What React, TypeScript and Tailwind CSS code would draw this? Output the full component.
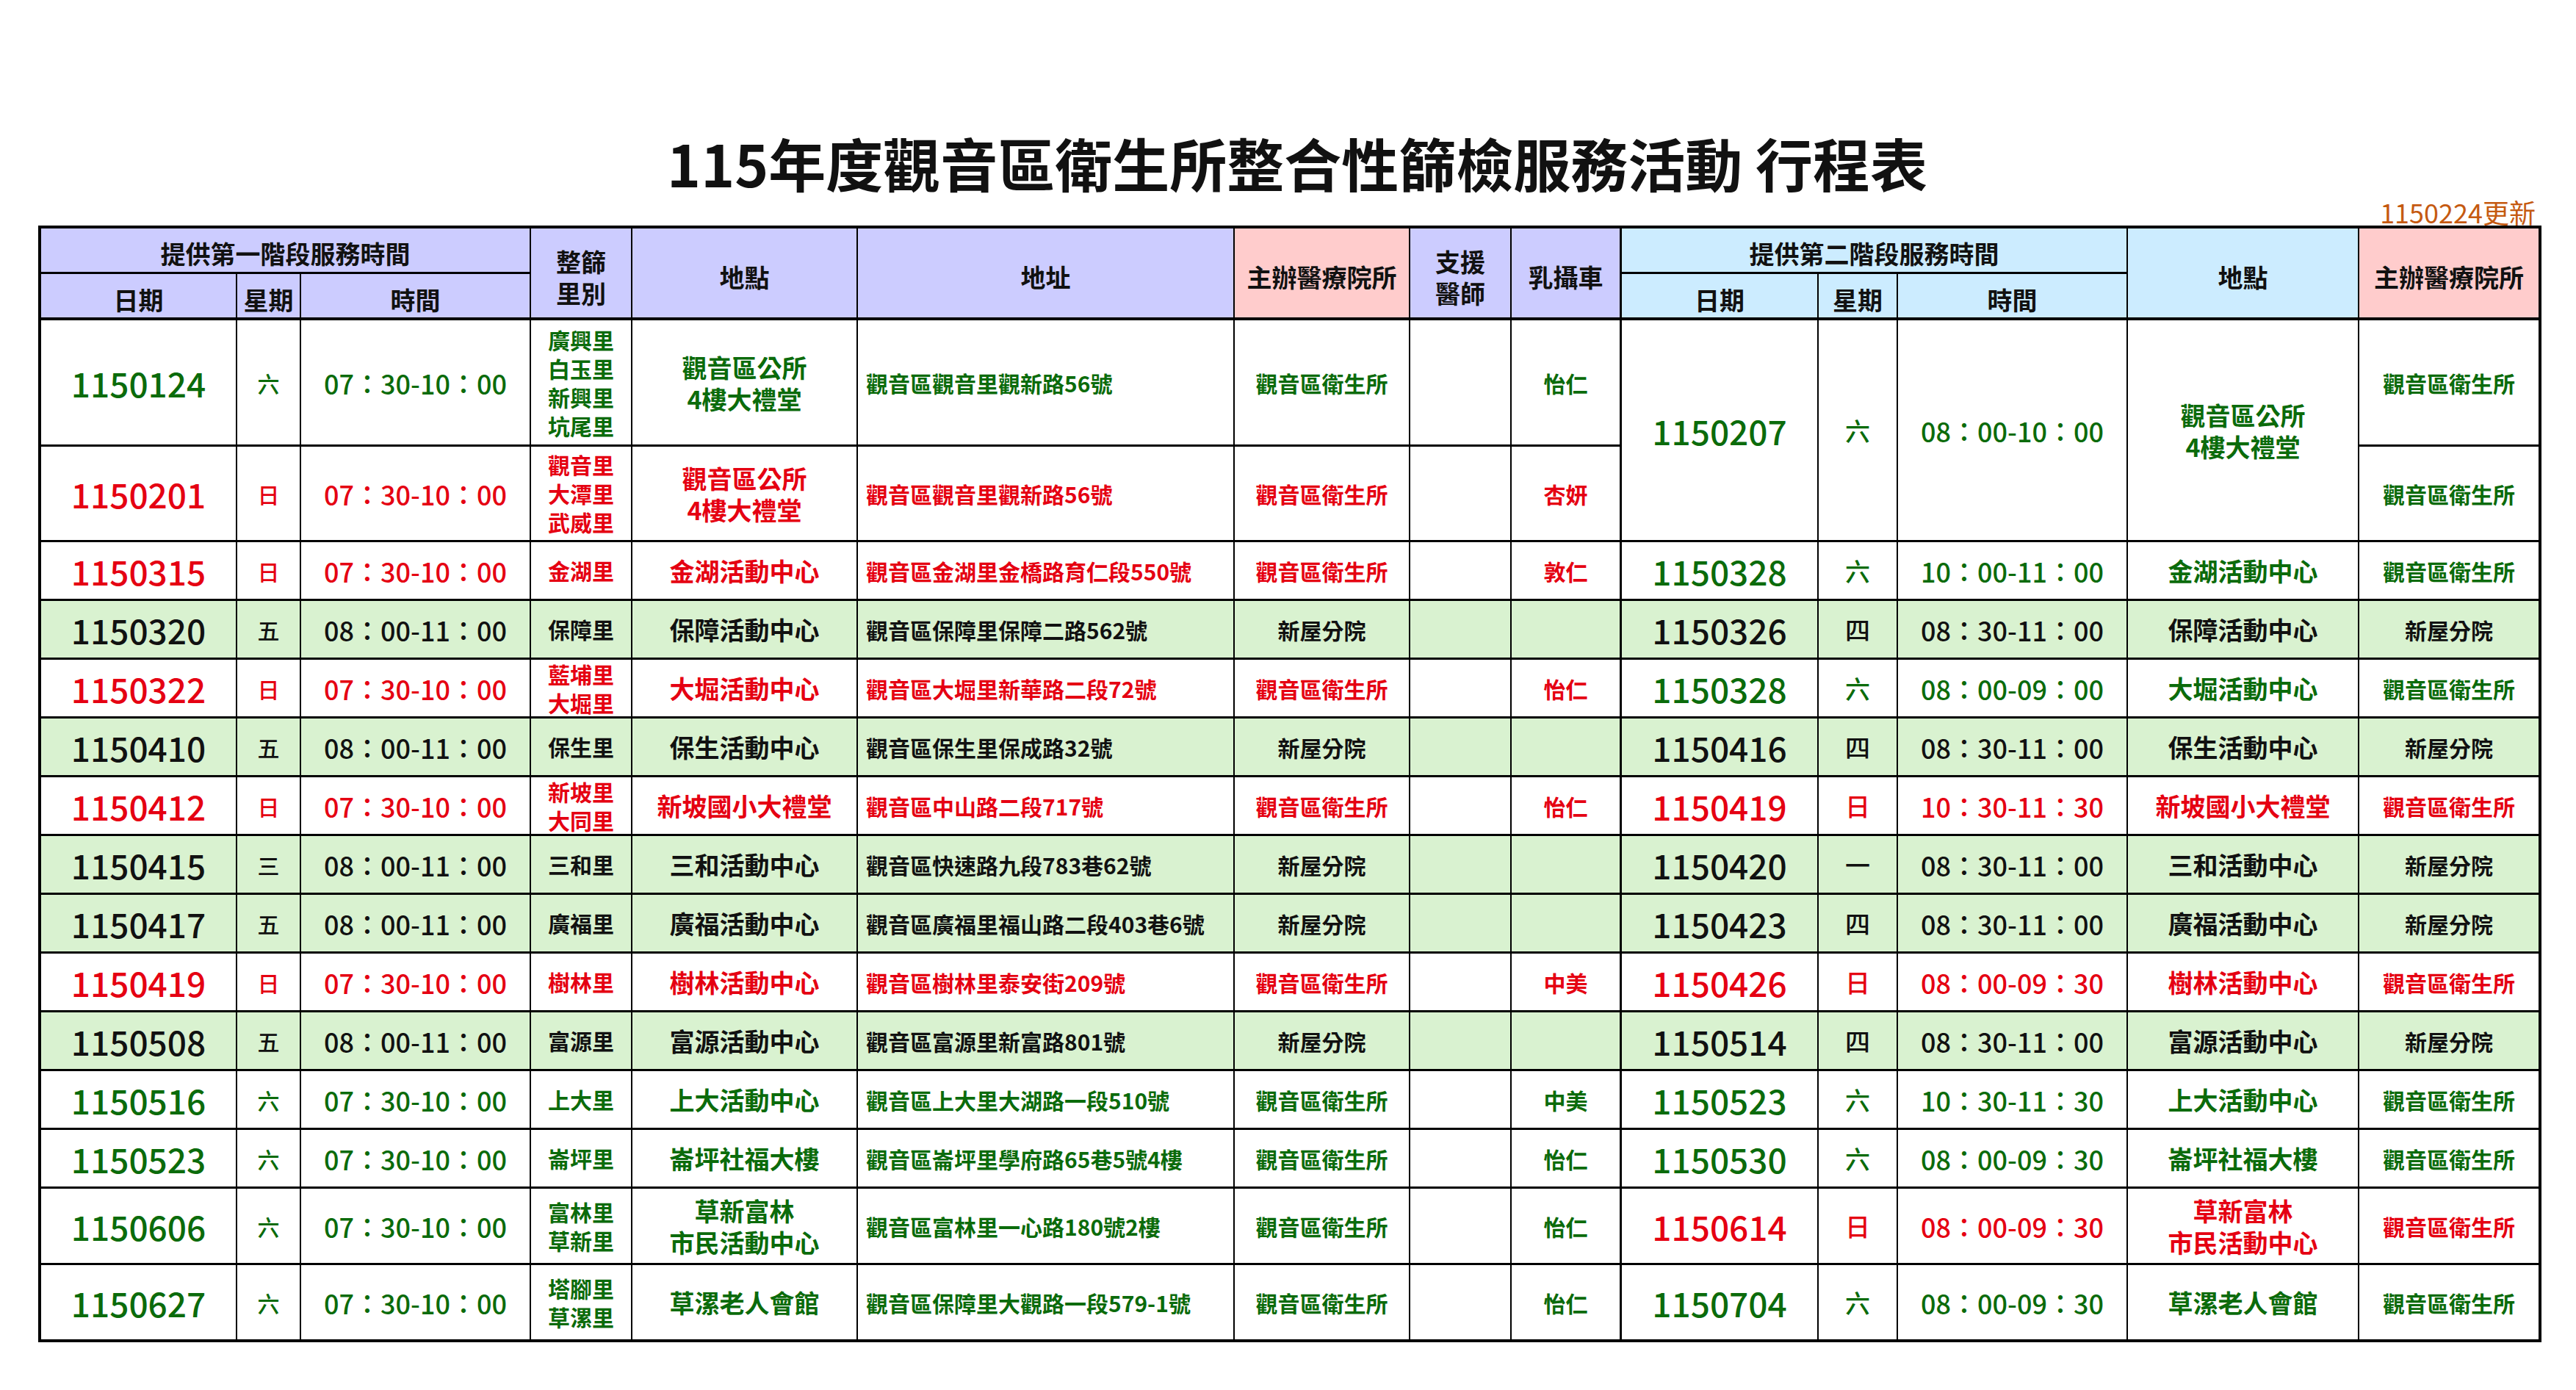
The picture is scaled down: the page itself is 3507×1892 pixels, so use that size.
import React from "react";

const C = {
  g: "text-[#0b6b0b]",
  r: "text-[#e50012]",
  k: "text-[#111111]",
} as const;
type Col = keyof typeof C;

type Right = { date: string; wk: string; time: string; place: string[]; c: Col; span?: boolean };
type Row = {
  bg?: boolean;
  c: Col;
  date: string;
  wk: string;
  time: string;
  li: string[];
  place: string[];
  addr: string;
  host: string;
  mammo?: string;
  right?: Right;
  host2: string;
  hc: Col;
};

const rows: Row[] = [
  {
    c: "g", date: "1150124", wk: "六", time: "07：30-10：00",
    li: ["廣興里", "白玉里", "新興里", "坑尾里"], place: ["觀音區公所", "4樓大禮堂"],
    addr: "觀音區觀音里觀新路56號", host: "觀音區衛生所", mammo: "怡仁",
    right: { date: "1150207", wk: "六", time: "08：00-10：00", place: ["觀音區公所", "4樓大禮堂"], c: "g", span: true },
    host2: "觀音區衛生所", hc: "g",
  },
  {
    c: "r", date: "1150201", wk: "日", time: "07：30-10：00",
    li: ["觀音里", "大潭里", "武威里"], place: ["觀音區公所", "4樓大禮堂"],
    addr: "觀音區觀音里觀新路56號", host: "觀音區衛生所", mammo: "杏妍",
    host2: "觀音區衛生所", hc: "g",
  },
  {
    c: "r", date: "1150315", wk: "日", time: "07：30-10：00",
    li: ["金湖里"], place: ["金湖活動中心"],
    addr: "觀音區金湖里金橋路育仁段550號", host: "觀音區衛生所", mammo: "敦仁",
    right: { date: "1150328", wk: "六", time: "10：00-11：00", place: ["金湖活動中心"], c: "g" },
    host2: "觀音區衛生所", hc: "g",
  },
  {
    bg: true, c: "k", date: "1150320", wk: "五", time: "08：00-11：00",
    li: ["保障里"], place: ["保障活動中心"],
    addr: "觀音區保障里保障二路562號", host: "新屋分院",
    right: { date: "1150326", wk: "四", time: "08：30-11：00", place: ["保障活動中心"], c: "k" },
    host2: "新屋分院", hc: "k",
  },
  {
    c: "r", date: "1150322", wk: "日", time: "07：30-10：00",
    li: ["藍埔里", "大堀里"], place: ["大堀活動中心"],
    addr: "觀音區大堀里新華路二段72號", host: "觀音區衛生所", mammo: "怡仁",
    right: { date: "1150328", wk: "六", time: "08：00-09：00", place: ["大堀活動中心"], c: "g" },
    host2: "觀音區衛生所", hc: "g",
  },
  {
    bg: true, c: "k", date: "1150410", wk: "五", time: "08：00-11：00",
    li: ["保生里"], place: ["保生活動中心"],
    addr: "觀音區保生里保成路32號", host: "新屋分院",
    right: { date: "1150416", wk: "四", time: "08：30-11：00", place: ["保生活動中心"], c: "k" },
    host2: "新屋分院", hc: "k",
  },
  {
    c: "r", date: "1150412", wk: "日", time: "07：30-10：00",
    li: ["新坡里", "大同里"], place: ["新坡國小大禮堂"],
    addr: "觀音區中山路二段717號", host: "觀音區衛生所", mammo: "怡仁",
    right: { date: "1150419", wk: "日", time: "10：30-11：30", place: ["新坡國小大禮堂"], c: "r" },
    host2: "觀音區衛生所", hc: "r",
  },
  {
    bg: true, c: "k", date: "1150415", wk: "三", time: "08：00-11：00",
    li: ["三和里"], place: ["三和活動中心"],
    addr: "觀音區快速路九段783巷62號", host: "新屋分院",
    right: { date: "1150420", wk: "一", time: "08：30-11：00", place: ["三和活動中心"], c: "k" },
    host2: "新屋分院", hc: "k",
  },
  {
    bg: true, c: "k", date: "1150417", wk: "五", time: "08：00-11：00",
    li: ["廣福里"], place: ["廣福活動中心"],
    addr: "觀音區廣福里福山路二段403巷6號", host: "新屋分院",
    right: { date: "1150423", wk: "四", time: "08：30-11：00", place: ["廣福活動中心"], c: "k" },
    host2: "新屋分院", hc: "k",
  },
  {
    c: "r", date: "1150419", wk: "日", time: "07：30-10：00",
    li: ["樹林里"], place: ["樹林活動中心"],
    addr: "觀音區樹林里泰安街209號", host: "觀音區衛生所", mammo: "中美",
    right: { date: "1150426", wk: "日", time: "08：00-09：30", place: ["樹林活動中心"], c: "r" },
    host2: "觀音區衛生所", hc: "r",
  },
  {
    bg: true, c: "k", date: "1150508", wk: "五", time: "08：00-11：00",
    li: ["富源里"], place: ["富源活動中心"],
    addr: "觀音區富源里新富路801號", host: "新屋分院",
    right: { date: "1150514", wk: "四", time: "08：30-11：00", place: ["富源活動中心"], c: "k" },
    host2: "新屋分院", hc: "k",
  },
  {
    c: "g", date: "1150516", wk: "六", time: "07：30-10：00",
    li: ["上大里"], place: ["上大活動中心"],
    addr: "觀音區上大里大湖路一段510號", host: "觀音區衛生所", mammo: "中美",
    right: { date: "1150523", wk: "六", time: "10：30-11：30", place: ["上大活動中心"], c: "g" },
    host2: "觀音區衛生所", hc: "g",
  },
  {
    c: "g", date: "1150523", wk: "六", time: "07：30-10：00",
    li: ["崙坪里"], place: ["崙坪社福大樓"],
    addr: "觀音區崙坪里學府路65巷5號4樓", host: "觀音區衛生所", mammo: "怡仁",
    right: { date: "1150530", wk: "六", time: "08：00-09：30", place: ["崙坪社福大樓"], c: "g" },
    host2: "觀音區衛生所", hc: "g",
  },
  {
    c: "g", date: "1150606", wk: "六", time: "07：30-10：00",
    li: ["富林里", "草新里"], place: ["草新富林", "市民活動中心"],
    addr: "觀音區富林里一心路180號2樓", host: "觀音區衛生所", mammo: "怡仁",
    right: { date: "1150614", wk: "日", time: "08：00-09：30", place: ["草新富林", "市民活動中心"], c: "r" },
    host2: "觀音區衛生所", hc: "r",
  },
  {
    c: "g", date: "1150627", wk: "六", time: "07：30-10：00",
    li: ["塔腳里", "草漯里"], place: ["草漯老人會館"],
    addr: "觀音區保障里大觀路一段579-1號", host: "觀音區衛生所", mammo: "怡仁",
    right: { date: "1150704", wk: "六", time: "08：00-09：30", place: ["草漯老人會館"], c: "g" },
    host2: "觀音區衛生所", hc: "g",
  },
];

function Cell({ className, children }: { className: string; children?: React.ReactNode }) {
  return <div className={"flex flex-col items-center justify-center text-center border-black " + className}>{children}</div>;
}

function Lines({ items }: { items: string[] }) {
  return (
    <>
      {items.map((t, i) => (
        <div key={i} className="whitespace-nowrap">{t}</div>
      ))}
    </>
  );
}

const HL = "bg-[#ccccff]";
const HP = "bg-[#ffcccc]";
const HB = "bg-[#ccecff]";

export default function App() {
  return (
    <div
      className="w-[3507px] h-[1892px] bg-white text-[#111111]"
      style={{ fontFamily: '"Noto Sans CJK TC", "Noto Sans", sans-serif' }}
    >
      <div className="pl-[52px] pt-[172px]">
        <div className="w-[3408px] pl-[20px] text-center text-[78px] font-bold leading-[98px] whitespace-nowrap">
          115年度觀音區衛生所整合性篩檢服務活動 行程表
        </div>
        <div className="w-[3408px] h-[37px] flex justify-end items-end pr-[8px]">
          <span className="text-[36px] leading-[38px] text-[#c55a11] whitespace-nowrap">1150224更新</span>
        </div>
        <div className="grid w-fit border-4 border-black grid-cols-[267px_87px_313px_138px_307px_513px_239px_138px_150px_268px_108px_313px_315px_244px] grid-rows-[62px_63px_172px_130px_repeat(11,80px)_104px_101px] font-bold">
          {/* header row 1 */}
          <Cell className={"col-span-3 border-r-2 border-b-[3px] pt-[8px] text-[34px] " + HL}>提供第一階段服務時間</Cell>
          <Cell className={"row-span-2 border-r-2 border-b-4 pt-[10px] text-[34px] leading-[43px] " + HL}>
            <div>整篩</div>
            <div>里別</div>
          </Cell>
          <Cell className={"row-span-2 border-r-2 border-b-4 pt-[10px] text-[34px] " + HL}>地點</Cell>
          <Cell className={"row-span-2 border-r-2 border-b-4 pt-[10px] text-[34px] " + HL}>地址</Cell>
          <Cell className={"row-span-2 border-r-2 border-b-4 pt-[10px] text-[34px] " + HP}>主辦醫療院所</Cell>
          <Cell className={"row-span-2 border-r-2 border-b-4 pt-[10px] text-[34px] leading-[43px] " + HL}>
            <div>支援</div>
            <div>醫師</div>
          </Cell>
          <Cell className={"row-span-2 border-r-[3px] border-b-4 pt-[10px] text-[34px] " + HL}>乳攝車</Cell>
          <Cell className={"col-span-3 border-r-2 border-b-[3px] pt-[8px] text-[34px] " + HB}>提供第二階段服務時間</Cell>
          <Cell className={"row-span-2 border-r-2 border-b-4 pt-[10px] text-[34px] " + HB}>地點</Cell>
          <Cell className={"row-span-2 border-b-4 pt-[10px] text-[34px] " + HP}>主辦醫療院所</Cell>
          {/* header row 2 */}
          <Cell className={"border-r-2 border-b-4 pt-[10px] text-[34px] " + HL}>日期</Cell>
          <Cell className={"border-r-2 border-b-4 pt-[10px] text-[34px] " + HL}>星期</Cell>
          <Cell className={"border-r-2 border-b-4 pt-[10px] text-[34px] " + HL}>時間</Cell>
          <Cell className={"border-r-2 border-b-4 pt-[10px] text-[34px] " + HB}>日期</Cell>
          <Cell className={"border-r-2 border-b-4 pt-[10px] text-[34px] " + HB}>星期</Cell>
          <Cell className={"border-r-2 border-b-4 pt-[10px] text-[34px] " + HB}>時間</Cell>

          {rows.map((r, i) => {
            const last = i === rows.length - 1;
            const bb = last ? "border-b-0" : "border-b-[3px]";
            const bg = r.bg ? "bg-[#d9f2d0]" : "bg-white";
            const lc = C[r.c];
            const out: React.ReactNode[] = [];
            out.push(
              <Cell key="d" className={`border-r-2 ${bb} ${bg} ${lc} font-medium text-[46px] leading-[52px]`}>{r.date}</Cell>,
              <Cell key="w" className={`border-r-2 ${bb} ${bg} ${lc} font-medium text-[30px] leading-[40px]`}>{r.wk}</Cell>,
              <Cell key="t" className={`border-r-2 ${bb} ${bg} ${lc} font-medium text-[36px] leading-[46px] whitespace-nowrap`}>{r.time}</Cell>,
              <Cell key="l" className={`border-r-2 ${bb} ${bg} ${lc} text-[30px] leading-[39px]`}>
                <Lines items={r.li} />
              </Cell>,
              <Cell key="p" className={`border-r-2 ${bb} ${bg} ${lc} text-[34px] leading-[43px]`}>
                <Lines items={r.place} />
              </Cell>,
              <div key="a" className={`flex items-center pl-[11px] border-black border-r-2 ${bb} ${bg} ${lc} text-[30px] leading-[40px] whitespace-nowrap`}>
                {r.addr}
              </div>,
              <Cell key="h" className={`border-r-2 ${bb} ${bg} ${lc} text-[30px] leading-[40px]`}>{r.host}</Cell>,
              <Cell key="s" className={`border-r-2 ${bb} ${bg}`} />,
              <Cell key="m" className={`border-r-[3px] ${bb} ${bg} ${lc} text-[30px] leading-[40px]`}>{r.mammo ?? ""}</Cell>
            );
            if (r.right) {
              const rc = C[r.right.c];
              const sp = r.right.span ? "row-span-2" : "";
              out.push(
                <Cell key="rd" className={`${sp} border-r-2 ${bb} ${bg} ${rc} font-medium text-[46px] leading-[52px]`}>{r.right.date}</Cell>,
                <Cell key="rw" className={`${sp} border-r-2 ${bb} ${bg} ${rc} font-medium text-[34px] leading-[40px]`}>{r.right.wk}</Cell>,
                <Cell key="rt" className={`${sp} border-r-2 ${bb} ${bg} ${rc} font-medium text-[36px] leading-[46px] whitespace-nowrap`}>{r.right.time}</Cell>,
                <Cell key="rp" className={`${sp} border-r-2 ${bb} ${bg} ${rc} text-[34px] leading-[43px]`}>
                  <Lines items={r.right.place} />
                </Cell>
              );
            }
            out.push(
              <Cell key="rh" className={`${bb} ${bg} ${C[r.hc]} text-[30px] leading-[40px]`}>{r.host2}</Cell>
            );
            return <React.Fragment key={i}>{out}</React.Fragment>;
          })}
        </div>
      </div>
    </div>
  );
}
